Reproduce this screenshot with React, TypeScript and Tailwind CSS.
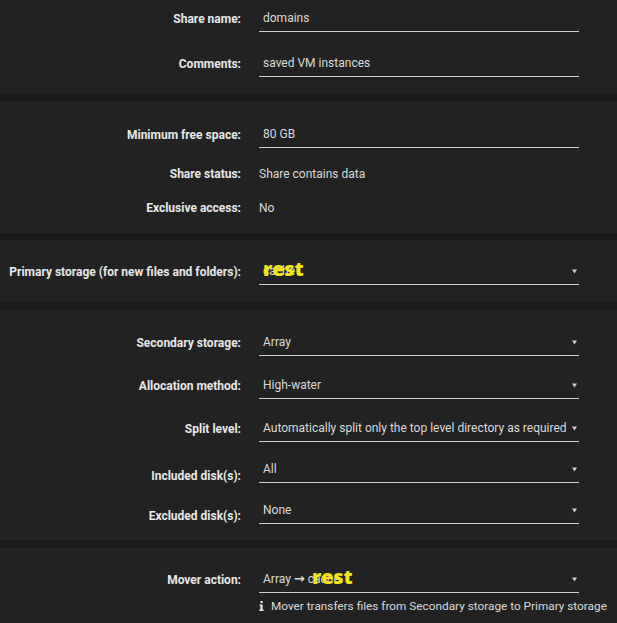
import React from "react";

const font = { fontFamily: "Roboto, 'Liberation Sans', sans-serif" };

function Caret() {
  return (
    <svg width="5" height="5" viewBox="0 0 5 5" className="absolute right-[2px] top-[11px]">
      <polygon points="0,0.5 5,0.5 2.5,4.5" fill="#cfcfcf" />
    </svg>
  );
}

function Label({ children, extra = "" }: { children: React.ReactNode; extra?: string }) {
  return (
    <div className={`w-[241px] shrink-0 text-right text-[12px] font-bold text-[#e8e8e8] leading-[16px] ${extra}`}>
      {children}
    </div>
  );
}

function InputRow({
  label,
  children,
  select = false,
  className = "",
  labelExtra = "",
  alignStart = false,
}: {
  label: string;
  children?: React.ReactNode;
  select?: boolean;
  className?: string;
  labelExtra?: string;
  alignStart?: boolean;
}) {
  return (
    <div className={`flex ${alignStart ? "items-start" : "items-center"} h-[27px] ${className}`}>
      <Label extra={labelExtra}>{label}</Label>
      <div className="relative ml-[18px] w-[320px] h-[27px] border-b border-[#cfcfcf] flex items-center pl-[4px] text-[12px] text-[#dadada] leading-[16px]">
        {children}
        {select && <Caret />}
      </div>
    </div>
  );
}

function StaticRow({ label, value, className = "" }: { label: string; value: string; className?: string }) {
  return (
    <div className={`flex items-center h-[20px] ${className}`}>
      <Label>{label}</Label>
      <div className="ml-[18px] text-[12px] text-[#dadada] leading-[16px]">{value}</div>
    </div>
  );
}

function Rest({ left }: { left: string }) {
  return (
    <span
      className={`absolute top-[0px] ${left} text-[20px] leading-[22px] font-extrabold text-[#f2e31a] tracking-[-0.2px]`}
      style={{ fontFamily: "'Open Sans', 'DejaVu Sans', sans-serif" }}
    >
      rest
    </span>
  );
}

export default function App() {
  return (
    <div className="w-[617px] h-[623px] bg-[#1a1a1a] overflow-hidden" style={font}>
      <div className="bg-[#222222] pt-[5px] pb-[17px]">
        <InputRow label="Share name:">domains</InputRow>
        <InputRow label="Comments:" className="mt-[18px]">saved VM instances</InputRow>
      </div>

      <div className="bg-[#222222] mt-[7px] pt-[20px] pb-[15px]">
        <InputRow label="Minimum free space:">80 GB</InputRow>
        <StaticRow label="Share status:" value="Share contains data" className="mt-[16px]" />
        <StaticRow label="Exclusive access:" value="No" className="mt-[14px]" />
      </div>

      <div className="bg-[#222222] mt-[7px] pt-[18px] pb-[17px]">
        <InputRow label="Primary storage (for new files and folders):" select>
          <span>cache</span>
          <Rest left="left-[4px]" />
        </InputRow>
      </div>

      <div className="bg-[#222222] mt-[8px] pt-[19px] pb-[16px]">
        <InputRow label="Secondary storage:" select>Array</InputRow>
        <InputRow label="Allocation method:" select className="mt-[16px]">High-water</InputRow>
        <InputRow label="Split level:" select className="mt-[16px]">
          Automatically split only the top level directory as required
        </InputRow>
        <InputRow label="Included disk(s):" select className="mt-[14px]" labelExtra="mt-[12px]" alignStart>
          All
        </InputRow>
        <InputRow label="Excluded disk(s):" select className="mt-[14px]" labelExtra="mt-[11px]" alignStart>
          None
        </InputRow>
      </div>

      <div className="bg-[#222222] mt-[8px] pt-[18px] h-[75px]">
        <InputRow label="Mover action:" select>
          <span>
            Array <span className="text-[13px] font-bold" style={{ fontFamily: "'DejaVu Sans', sans-serif" }}>→</span> cache
          </span>
          <Rest left="left-[53px]" />
        </InputRow>
        <div className="flex items-center h-[16px] mt-[5px]">
          <div className="w-[241px] shrink-0" />
          <div className="ml-[18px] flex items-center whitespace-nowrap text-[11.8px] text-[#dadada] leading-[16px]">
            <svg width="5" height="10" viewBox="0 0 5 10" className="mr-[7px]">
              <rect x="1.5" y="0" width="2.2" height="2.2" fill="#e0e0e0" />
              <path d="M0.5 3.5 H3.7 V8.6 H4.6 V10 H0.3 V8.6 H1.3 V4.8 H0.5 Z" fill="#e0e0e0" />
            </svg>
            Mover transfers files from Secondary storage to Primary storage
          </div>
        </div>
      </div>
    </div>
  );
}
